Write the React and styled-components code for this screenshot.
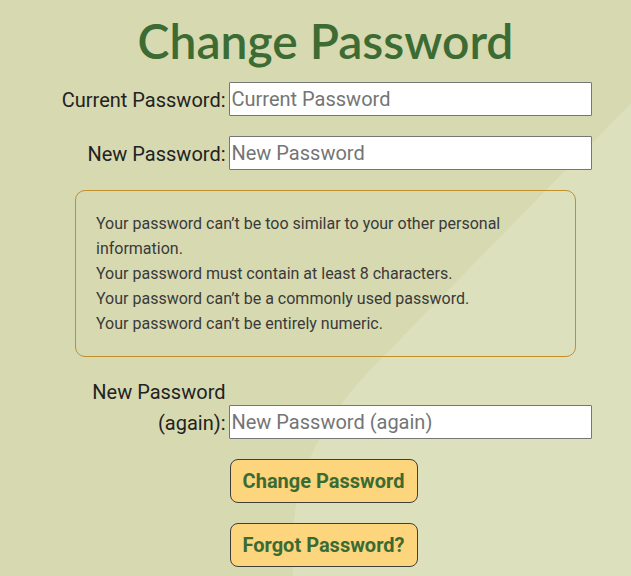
import React from "react";
import styled, { createGlobalStyle } from "styled-components";

const GlobalStyle = createGlobalStyle`
  html, body {
    margin: 0;
    padding: 0;
    background: #d7d9b1;
  }
  body {
    font-family: Roboto, "Liberation Sans", sans-serif;
    color: #222;
  }
`;

const Page = styled.div`
  position: relative;
  min-height: 576px;
  overflow: hidden;
  padding-left: 20px;
  box-sizing: border-box;
`;

const Backdrop = styled.svg`
  position: absolute;
  inset: 0;
  width: 631px;
  height: 576px;
  z-index: 0;
`;

const Content = styled.main`
  position: relative;
  z-index: 1;
  display: flex;
  flex-direction: column;
  align-items: center;
`;

const Title = styled.h1`
  margin: 14px 0 14px;
  font-family: "Lato", "Noto Sans", sans-serif;
  font-weight: 600;
  font-size: 48px;
  line-height: 54px;
  color: #3c6b33;
`;

const Form = styled.form`
  display: flex;
  flex-direction: column;
  align-items: center;
  gap: 20px;
`;

const Row = styled.div`
  display: grid;
  grid-template-columns: 166px 363px;
  column-gap: 3px;
  align-items: end;
  width: 532px;
`;

const Label = styled.label`
  font-size: 20px;
  line-height: 31px;
  text-align: right;
  color: #222;
`;

const Input = styled.input`
  box-sizing: border-box;
  width: 363px;
  height: 34px;
  margin: 0;
  padding: 0 2px;
  border: 1px solid #767676;
  border-radius: 1px;
  background: #fff;
  font-family: Roboto, "Liberation Sans", sans-serif;
  font-size: 20px;
  color: #222;

  &::placeholder {
    color: #757575;
  }
`;

const Rules = styled.ul`
  box-sizing: border-box;
  width: 501px;
  margin: 0;
  padding: 20px;
  list-style: none;
  border: 1px solid #c0902a;
  border-radius: 10px;
  font-size: 16px;
  line-height: 25px;
  color: #3a3a3a;
`;

const Actions = styled.div`
  display: flex;
  flex-direction: column;
  gap: 20px;
  width: 532px;
  padding-left: 170px;
  box-sizing: border-box;
`;

const Button = styled.button`
  box-sizing: border-box;
  width: 188px;
  height: 44px;
  border: 1px solid #3f3f3f;
  border-radius: 8px;
  background: #fdd57c;
  color: #3a6b34;
  font-family: Roboto, "Liberation Sans", sans-serif;
  font-weight: 700;
  font-size: 20px;
  cursor: pointer;
`;

const rules = [
  "Your password can’t be too similar to your other personal information.",
  "Your password must contain at least 8 characters.",
  "Your password can’t be a commonly used password.",
  "Your password can’t be entirely numeric.",
];

export default function App() {
  return (
    <>
      <GlobalStyle />
      <Page>
        <Backdrop viewBox="0 0 631 576" aria-hidden="true">
          <path
            d="M 640 94 L 372 368 Q 293 449 293 540 L 293 576 L 640 576 Z"
            fill="#dce0bd"
          />
        </Backdrop>
        <Content>
          <Title>Change Password</Title>
          <Form onSubmit={(e) => e.preventDefault()}>
            <Row>
              <Label htmlFor="old">Current Password:</Label>
              <Input id="old" type="password" placeholder="Current Password" />
            </Row>
            <Row>
              <Label htmlFor="new1">New Password:</Label>
              <Input id="new1" type="password" placeholder="New Password" />
            </Row>
            <Rules>
              {rules.map((r) => (
                <li key={r}>{r}</li>
              ))}
            </Rules>
            <Row>
              <Label htmlFor="new2">New Password (again):</Label>
              <Input
                id="new2"
                type="password"
                placeholder="New Password (again)"
              />
            </Row>
            <Actions>
              <Button type="submit">Change Password</Button>
              <Button type="button">Forgot Password?</Button>
            </Actions>
          </Form>
        </Content>
      </Page>
    </>
  );
}
